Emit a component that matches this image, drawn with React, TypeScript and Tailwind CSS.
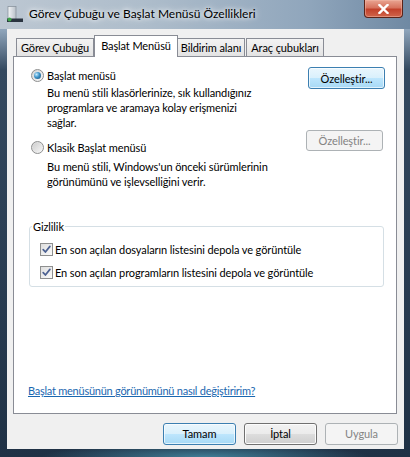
import React from 'react';

// Görev Çubuğu ve Başlat Menüsü Özellikleri — Windows 7 style property sheet.

type BtnKind = 'default' | 'normal' | 'disabled';

function WinButton({ kind, className = '', children }: { kind: BtnKind; className?: string; children: React.ReactNode }) {
  const look =
    kind === 'default'
      ? 'border-[#3c7fb1] bg-[linear-gradient(#eaf6fd_0%,#d9f0fc_50%,#bee6fd_50%,#a7d9f5_100%)] text-black shadow-[inset_0_0_0_1px_#ffffffaa]'
      : kind === 'normal'
        ? 'border-[#707070] bg-[linear-gradient(#f2f2f2_0%,#ebebeb_50%,#dddddd_50%,#cfcfcf_100%)] text-black shadow-[inset_0_0_0_1px_#fcfcfc]'
        : 'border-[#adb2b5] bg-[#f4f4f4] text-[#838383]';
  return (
    <div className={`flex items-center justify-center whitespace-nowrap rounded-[3px] border ${look} ${className}`}>
      {children}
    </div>
  );
}

function Radio({ checked }: { checked?: boolean }) {
  return (
    <span className="flex h-[13px] w-[13px] shrink-0 items-center justify-center rounded-full border border-[#8e8f8f] bg-[linear-gradient(135deg,#d4d4d4,#f8f8f8)]">
      {checked ? (
        <span className="h-[7px] w-[7px] rounded-full bg-[radial-gradient(circle_at_35%_35%,#c7ecff_0%,#3c93c9_45%,#1b4a70_100%)]" />
      ) : (
        <span className="h-[9px] w-[9px] rounded-full bg-[linear-gradient(135deg,#cfcfcf,#f4f4f4)]" />
      )}
    </span>
  );
}

function Check() {
  return (
    <span className="flex h-[13px] w-[13px] shrink-0 items-center justify-center border border-[#8e8f8f] bg-[linear-gradient(135deg,#dedede,#fbfbfb)]">
      <svg width="9" height="9" viewBox="0 0 9 9">
        <path d="M1.2 4.6 L3.4 7 L7.9 1.4" stroke="#4c6192" strokeWidth="1.7" fill="none" strokeLinecap="round" strokeLinejoin="round" />
      </svg>
    </span>
  );
}

function TitleIcon() {
  return (
    <svg width="16" height="16" viewBox="0 0 16 16">
      <defs>
        <linearGradient id="ti" x1="0" y1="0" x2="1" y2="0">
          <stop offset="0" stopColor="#f4f6f8" />
          <stop offset="1" stopColor="#b8c0c8" />
        </linearGradient>
      </defs>
      <rect x="1" y="0.5" width="8" height="13" fill="url(#ti)" stroke="#8a949e" strokeWidth="0.8" />
      <rect x="0" y="12.5" width="16" height="3.5" fill="#2a3440" />
      <circle cx="2.5" cy="13.5" r="2" fill="#3fa34a" />
    </svg>
  );
}

const tab = 'flex h-[18px] items-center justify-center whitespace-nowrap border border-b-0 border-[#898c95] bg-[linear-gradient(#f3f3f3,#e3e3e3)]';

export default function App() {
  return (
    <div className="flex h-[457px] w-[410px] flex-col overflow-hidden bg-[radial-gradient(ellipse_40%_14px_at_50%_100%,#3f7c95_0%,transparent_100%),linear-gradient(#aebfcf_0px,#8ea4ba_30px,#34495f_70px,#1f3145_100%)] font-['Lato',sans-serif] text-[11px] tracking-[-0.1px] text-black">
      {/* title bar */}
      <div className="flex h-[29px] shrink-0 bg-[linear-gradient(90deg,#bcc7d2_0%,#aebdcb_35%,#90a6bc_75%,#6f89a3_100%)]">
        <div className="ml-[7px] mt-[6px]">
          <TitleIcon />
        </div>
        <div className="ml-[6px] mt-[5px] whitespace-nowrap text-[12px] leading-[18px] tracking-normal [text-shadow:0_0_8px_#ffffff,0_0_4px_#ffffff]">
          Görev Çubuğu ve Başlat Menüsü Özellikleri
        </div>
        <div className="ml-auto mr-[7px] flex h-[18px] w-[39px] items-center justify-center rounded-b-[4px] border border-t-0 border-[#5b2318] bg-[linear-gradient(#e9a592_0%,#d7735e_45%,#c2412b_55%,#d0654b_100%)] shadow-[inset_0_0_0_1px_#f1b9aa80]">
          <svg width="11" height="10" viewBox="0 0 11 10">
            <path d="M1.5 1 L9.5 9 M9.5 1 L1.5 9" stroke="#ffffff" strokeWidth="2.4" strokeLinecap="square" />
          </svg>
        </div>
      </div>

      {/* client area */}
      <div className="mb-[8px] ml-[7px] mr-[6px] flex flex-1 flex-col bg-[#f0f0f0]">
        {/* tabs */}
        <div className="flex h-[27px] items-end pl-[9px] leading-[15px]">
          <div className={`${tab} w-[78px]`}>Görev Çubuğu</div>
          <div className="relative z-10 -mb-px flex h-[22px] w-[84px] items-start justify-center whitespace-nowrap border border-b-0 border-[#898c95] bg-white pt-[2px]">
            Başlat Menüsü
          </div>
          <div className={`${tab} w-[67px] border-l-0`}>Bildirim alanı</div>
          <div className={`${tab} ml-px w-[78px]`}>Araç çubukları</div>
        </div>

        {/* tab panel */}
        <div className="ml-[6px] mr-[7px] flex h-[358px] flex-col border border-[#898c95] bg-white pl-[17px] pr-[11px] pt-[10px] leading-[15px]">
          <div className="flex justify-between">
            <div className="mt-px">
              <div className="flex items-center gap-[3px]">
                <Radio checked />
                <span>Başlat menüsü</span>
              </div>
              <div className="mt-[2px] pl-[16px]">
                Bu menü stili klasörlerinize, sık kullandığınız
                <br />
                programlara ve aramaya kolay erişmenizi
                <br />
                sağlar.
              </div>
            </div>
            <WinButton kind="default" className="h-[22px] w-[77px]">
              Özelleştir...
            </WinButton>
          </div>

          <div className="flex justify-between">
            <div className="mt-[10px]">
              <div className="flex items-center gap-[3px]">
                <Radio />
                <span>Klasik Başlat menüsü</span>
              </div>
              <div className="mt-[4px] pl-[16px]">
                Bu menü stili, Windows'un önceki sürümlerinin
                <br />
                görünümünü ve işlevselliğini verir.
              </div>
            </div>
            <WinButton kind="disabled" className="mr-[2px] h-[21px] w-[77px]">
              Özelleştir...
            </WinButton>
          </div>

          <fieldset className="-ml-[2px] mr-px mt-[30px] rounded-[3px] border border-[#d5dfe5] pb-[6px] pl-[10px]">
            <legend className="-ml-[8px] px-[1px]">Gizlilik</legend>
            <div className="mt-[8px] flex items-center gap-[2px]">
              <Check />
              <span>En son açılan dosyaların listesini depola ve görüntüle</span>
            </div>
            <div className="mt-[8px] flex items-center gap-[2px]">
              <Check />
              <span>En son açılan programların listesini depola ve görüntüle</span>
            </div>
          </fieldset>

          <div className="-ml-[3px] mb-[15px] mt-auto tracking-[-0.25px] text-[#1a67b0] underline">
            Başlat menüsünün görünümünü nasıl değiştiririm?
          </div>
        </div>

        {/* dialog buttons */}
        <div className="mt-[9px] flex justify-end gap-[8px] pr-[6px]">
          <WinButton kind="default" className="h-[22px] w-[73px]">
            Tamam
          </WinButton>
          <WinButton kind="normal" className="h-[22px] w-[73px]">
            İptal
          </WinButton>
          <WinButton kind="disabled" className="h-[22px] w-[73px]">
            Uygula
          </WinButton>
        </div>
      </div>
    </div>
  );
}
